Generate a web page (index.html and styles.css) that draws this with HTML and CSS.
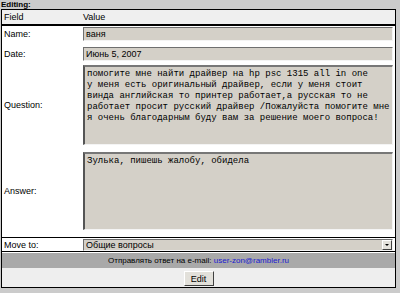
FILE: index.html
```html
<!DOCTYPE html>
<html lang="ru">
<head>
  <meta charset="UTF-8" />
  <meta name="viewport" content="width=device-width, initial-scale=1.0"/>
  <title>Editing</title>
  <link rel="stylesheet" href="styles.css">
</head>
<body>
  <div class="caption">Editing:</div>
  <form class="frame">
    <div class="row head">
      <div class="label">Field</div>
      <div class="value">Value</div>
    </div>
    <div class="row row-name">
      <label class="label" for="name">Name:</label>
      <div class="value"><input class="field" type="text" id="name" value="ваня" /></div>
    </div>
    <div class="row row-date">
      <label class="label" for="date">Date:</label>
      <div class="value"><input class="field" type="text" id="date" value="Июнь 5, 2007" /></div>
    </div>
    <div class="row row-question">
      <label class="label" for="question">Question:</label>
      <div class="value"><textarea class="field area-question" id="question" wrap="off">помогите мне найти драйвер на hp psc 1315 all in one
у меня есть оригинальный драйвер, если у меня стоит
винда английская то принтер работает,а русская то не
работает просит русский драйвер /Пожалуйста помогите мне
я очень благодарным буду вам за решение моего вопроса!</textarea></div>
    </div>
    <div class="row row-answer">
      <label class="label" for="answer">Answer:</label>
      <div class="value"><textarea class="field area-answer" id="answer" wrap="off">Зулька, пишешь жалобу, обидела</textarea></div>
    </div>
    <div class="row row-move">
      <label class="label" for="move">Move to:</label>
      <div class="value">
        <div class="select">
          <select id="move">
            <option>Общие вопросы</option>
          </select>
          <span class="arrow"></span>
        </div>
      </div>
    </div>
    <div class="mailbar">Отправлять ответ на e-mail: <a href="#">user-zon@rambler.ru</a></div>
    <div class="actions">
      <button type="button" class="btn">Edit</button>
    </div>
  </form>
</body>
</html>
```

FILE: styles.css
```css
* {
  box-sizing: border-box;
}
body {
  margin: 0;
  background: #cbcbcb;
  font-family: "Liberation Sans", Arial, sans-serif;
  font-size: 9px;
  color: #000;
}
.caption {
  height: 9px;
  line-height: 9px;
  padding-left: 1px;
  font-size: 8px;
  font-weight: bold;
}
.frame {
  width: 395px;
  margin: 0 0 0 1px;
  border: 1px solid #000;
  background: #fff;
}
.row {
  display: flex;
  align-items: center;
}
.label {
  width: 81px;
  padding-left: 2px;
}
.value {
  flex: 1;
  padding-right: 2px;
}
.head {
  height: 16px;
  background: #efefef;
  border-bottom: 2px solid #000;
}
.row-name {
  padding: 1px 0 3px;
}
.row-date {
  padding: 3px 0 2px;
}
.row-question {
  padding: 2px 0 3px;
}
.row-answer {
  padding: 4px 0 7px;
}
.row-move {
  padding: 1px 0 0;
  border-top: 1px solid #000;
  border-bottom: 1px solid #000;
}
.field {
  display: block;
  width: 100%;
  height: 14px;
  margin: 0;
  padding: 0 2px;
  border: 1px solid;
  border-color: #6f6f6f #f4f4f4 #f4f4f4 #6f6f6f;
  background: #d4d0c8;
  font-family: "Liberation Sans", Arial, sans-serif;
  font-size: 9px;
  color: #000;
  outline: none;
}
textarea.field {
  padding: 2px 2px;
  border-width: 2px 1px 1px 2px;
  border-color: #777 #f4f4f4 #f4f4f4 #555;
  font-family: "Liberation Mono", "Courier New", monospace;
  font-size: 9px;
  line-height: 11px;
  resize: none;
  overflow: hidden;
}
.area-question {
  height: 80px;
}
.area-answer {
  height: 78px;
}
.select {
  display: flex;
  align-items: center;
  height: 12px;
  border: 1px solid;
  border-color: #6f6f6f #f4f4f4 #f4f4f4 #6f6f6f;
  background: #d4d0c8;
}
.select select {
  flex: 1;
  height: 100%;
  padding: 0 2px;
  border: 0;
  background: transparent;
  font-family: "Liberation Sans", Arial, sans-serif;
  font-size: 9px;
  color: #000;
  appearance: none;
  -webkit-appearance: none;
  outline: none;
}
.arrow {
  display: flex;
  align-items: center;
  justify-content: center;
  width: 10px;
  height: 10px;
  border: 1px solid;
  border-color: #fff #404040 #404040 #fff;
  background: #e4e2dc;
}
.arrow::after {
  content: "";
  border-left: 2px solid transparent;
  border-right: 2px solid transparent;
  border-top: 2px solid #000;
}
.mailbar {
  height: 15px;
  margin-top: 1px;
  background: #a9a9a9;
  font-size: 8px;
  line-height: 15px;
  text-align: center;
}
.mailbar a {
  color: #1a1ad0;
  text-decoration: none;
}
.actions {
  display: flex;
  justify-content: center;
  height: 19px;
  padding-top: 3px;
  background: #eeeeee;
}
.btn {
  width: 30px;
  height: 15px;
  padding: 0;
  border: 1px solid;
  border-color: #fff #404040 #404040 #fff;
  background: #e2e0da;
  font-family: "Liberation Sans", Arial, sans-serif;
  font-size: 9px;
  color: #000;
}
```
